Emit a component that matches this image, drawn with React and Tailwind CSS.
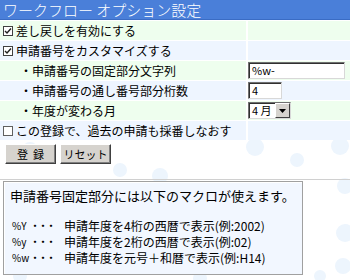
import React from 'react'

const jp = "font-['Noto_Sans_CJK_JP','Noto_Sans',sans-serif]"

const Check = ({ checked }) => (
  <span className="inline-flex items-center justify-center w-[10px] h-[10px] border border-[#404040] bg-white mr-[3px] shrink-0">
    {checked && (
      <svg width="8" height="8" viewBox="0 0 8 8">
        <path d="M1 4 L3 6 L7 1.5" stroke="#202020" strokeWidth="1.4" fill="none" />
      </svg>
    )}
  </span>
)

const Row = ({ green, children, right }) => (
  <div className="flex gap-[2px] h-[19px]">
    <div className={`w-[246px] flex items-center px-[3px] ${green ? 'bg-[#eefeee]' : 'bg-[#eef5ff]'}`}>
      {children}
    </div>
    <div className={`flex-1 flex items-center ${green ? 'bg-[#eefeee]' : 'bg-[#eef5ff]'}`}>
      {right}
    </div>
  </div>
)

const Field = ({ w, value }) => (
  <div className={`${w} h-[17px] bg-white border border-t-[#707070] border-l-[#707070] border-b-[#d8d8d8] border-r-[#d8d8d8] shadow-[inset_1px_1px_0_#303030] flex items-center pl-[3px] text-[11px] leading-none text-black`}>
    {value}
  </div>
)

const Button = ({ children }) => (
  <button className="w-[51px] h-[20px] bg-[#d6d3ce] border border-t-white border-l-white border-b-[#404040] border-r-[#404040] shadow-[inset_-1px_-1px_0_#808080] text-[11px] leading-none text-black">
    {children}
  </button>
)

export default function App() {
  const bubbles = [
    [255, 147, 9], [297, 160, 7], [340, 146, 9], [345, 186, 8], [345, 233, 9],
    [343, 266, 8], [225, 195, 6], [30, 150, 8], [120, 170, 7], [160, 176, 8],
    [20, 276, 7], [200, 278, 7], [320, 276, 6],
  ]
  return (
    <div className={`relative w-[350px] h-[280px] bg-white overflow-hidden ${jp} text-black`}>
      <svg className="absolute inset-0" width="350" height="280">
        {bubbles.map(([x, y, r], i) => (
          <circle key={i} cx={x} cy={y} r={r} fill="#edf5fd" />
        ))}
      </svg>
      <div className="relative flex flex-col">
        <div className="h-[20px] bg-[#4a7fd9] border-b border-[#3a6cc4] flex items-center pl-[3px] text-white text-[15px] leading-none font-light">
          ワークフロー オプション設定
        </div>
        <div className="flex flex-col gap-px mt-px text-[12px] leading-none">
          <Row green>
            <Check checked />差し戻しを有効にする
          </Row>
          <Row>
            <Check checked />申請番号をカスタマイズする
          </Row>
          <Row green right={<Field w="w-[97px]" value="%w-" />}>
            <span className="pl-[17px]">・申請番号の固定部分文字列</span>
          </Row>
          <Row right={<Field w="w-[34px]" value="4" />}>
            <span className="pl-[17px]">・申請番号の通し番号部分桁数</span>
          </Row>
          <Row
            green
            right={
              <div className="w-[43px] h-[17px] bg-white border border-t-[#707070] border-l-[#707070] border-b-[#d8d8d8] border-r-[#d8d8d8] shadow-[inset_1px_1px_0_#303030] flex items-center text-[11px] leading-none">
                <span className="flex-1 pl-[3px]">4 月</span>
                <span className="w-[15px] h-[15px] bg-[#d6d3ce] border border-t-white border-l-white border-b-[#404040] border-r-[#404040] flex items-center justify-center">
                  <svg width="7" height="4" viewBox="0 0 7 4"><path d="M0 0 H7 L3.5 4 Z" fill="#000" /></svg>
                </span>
              </div>
            }
          >
            <span className="pl-[17px]">・年度が変わる月</span>
          </Row>
          <Row>
            <span className="inline-block w-[10px] h-[10px] border border-[#606060] bg-white mr-[3px]" />
            この登録で、過去の申請も採番しなおす
          </Row>
        </div>
        <div className="flex gap-[4px] pl-[5px] mt-[4px]">
          <Button>登&nbsp;&nbsp;録</Button>
          <Button>リセット</Button>
        </div>
        <div className="mt-[15px] h-px bg-[#d0d0d0] w-full" />
        <div className="ml-[3px] mt-[1px] w-[300px] h-[94px] border border-[#a0a0a0] shadow-[inset_1px_1px_0_#ffffff] bg-[#f2f7ff] px-[6px] pt-[6px]">
          <div className="text-[13px] leading-[16px]">申請番号固定部分には以下のマクロが使えます。</div>
          <div className="h-[14px]" />
          {[
            ['%Y', '申請年度を4桁の西暦で表示(例:2002)'],
            ['%y', '申請年度を2桁の西暦で表示(例:02)'],
            ['%w', '申請年度を元号＋和暦で表示(例:H14)'],
          ].map(([k, t]) => (
            <div key={k} className="flex items-center h-[16px]">
              <span className="w-[20px] pl-[2px] text-[10px] leading-none shrink-0">{k}</span>
              <span className="ml-[2px] mr-[8px] text-[12px] leading-none tracking-[2px] font-bold shrink-0">･･･</span>
              <span className="text-[12px] leading-none">{t}</span>
            </div>
          ))}
        </div>
      </div>
    </div>
  )
}
